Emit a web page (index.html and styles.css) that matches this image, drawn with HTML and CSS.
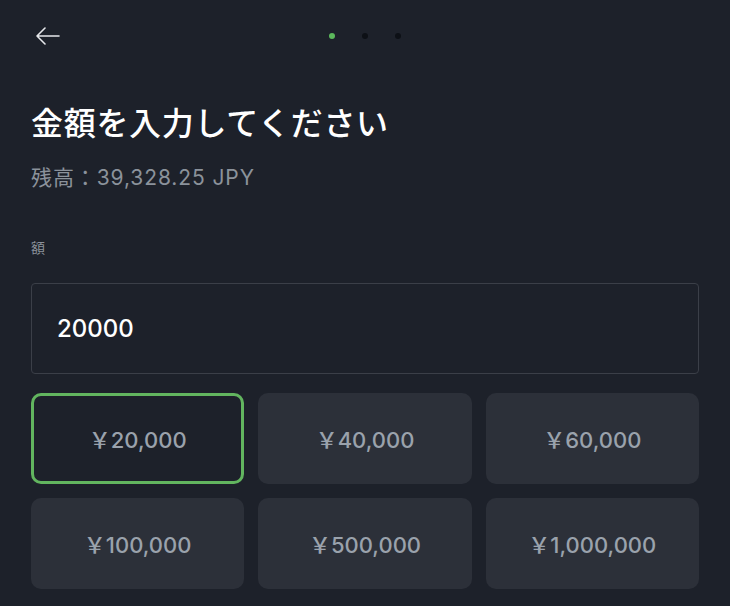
FILE: index.html
```html
<!DOCTYPE html>
<html lang="ja">
    <head>
        <meta charset="UTF-8" />
        <meta name="viewport" content="width=device-width, initial-scale=1.0" />
        <title>入金</title>
        <link rel="stylesheet" href="styles.css">
    </head>
    <body>
        <div class="topbar">
            <button class="back-btn" type="button" aria-label="戻る">
                <svg width="26" height="18" viewBox="0 0 26 18">
                    <path d="M24 9H2M10 1L2 9l8 8" fill="none" stroke="#e6e8eb" stroke-width="1.6" stroke-linecap="round" stroke-linejoin="round"/>
                </svg>
            </button>
            <div class="steps">
                <span class="step active"></span>
                <span class="step"></span>
                <span class="step"></span>
            </div>
        </div>

        <div class="container">
            <h1>金額を入力してください</h1>
            <p class="balance">残高：39,328.25 JPY</p>

            <label class="field-label" for="amount">額</label>
            <input class="amount-input" id="amount" type="text" value="20000" />

            <div class="presets">
                <button class="preset selected" type="button">￥20,000</button>
                <button class="preset" type="button">￥40,000</button>
                <button class="preset" type="button">￥60,000</button>
                <button class="preset" type="button">￥100,000</button>
                <button class="preset" type="button">￥500,000</button>
                <button class="preset" type="button">￥1,000,000</button>
            </div>
        </div>
    </body>
</html>
```

FILE: styles.css
```css
body {
    margin: 0;
    background-color: #1d212a;
    color: #ffffff;
    font-family: Inter, "Noto Sans CJK JP", sans-serif;
}

.topbar {
    position: relative;
    height: 72px;
    display: flex;
    align-items: center;
    justify-content: center;
}

.back-btn {
    position: absolute;
    left: 35px;
    top: 27px;
    padding: 0;
    background: none;
    border: none;
    cursor: pointer;
}

.back-btn svg {
    display: block;
}

.steps {
    display: flex;
    gap: 27px;
    margin-left: -1px;
}

.step {
    width: 6px;
    height: 6px;
    border-radius: 50%;
    background-color: #0d1016;
}

.step.active {
    background-color: #5cb85c;
}

.container {
    padding: 0 31px;
}

h1 {
    margin: 32px 0 0;
    font-size: 32px;
    line-height: 40px;
    font-weight: 500;
    letter-spacing: 0.7px;
}

.balance {
    margin: 20px 0 0;
    font-size: 21px;
    line-height: 28px;
    letter-spacing: 0.9px;
    color: #8b929b;
}

.field-label {
    display: block;
    margin-top: 46px;
    font-size: 14px;
    line-height: 20px;
    color: #8b919a;
}

.amount-input {
    display: block;
    width: 100%;
    height: 91px;
    margin-top: 25px;
    padding: 0 25px;
    box-sizing: border-box;
    background-color: #1d212a;
    border: 1px solid #3b3f48;
    border-radius: 4px;
    color: #ffffff;
    font-family: inherit;
    font-size: 24px;
    font-weight: 500;
    outline: none;
}

.presets {
    display: grid;
    grid-template-columns: repeat(3, 1fr);
    grid-auto-rows: 91px;
    gap: 14px;
    margin-top: 19px;
}

.preset {
    padding: 0 0 2px;
    background-color: #2c3039;
    border: none;
    border-radius: 10px;
    color: #9aa2ac;
    font-family: inherit;
    font-size: 22px;
    font-weight: 500;
    cursor: pointer;
}

.preset.selected {
    background-color: #1d212a;
    border: 3px solid #62b55f;
}
```
